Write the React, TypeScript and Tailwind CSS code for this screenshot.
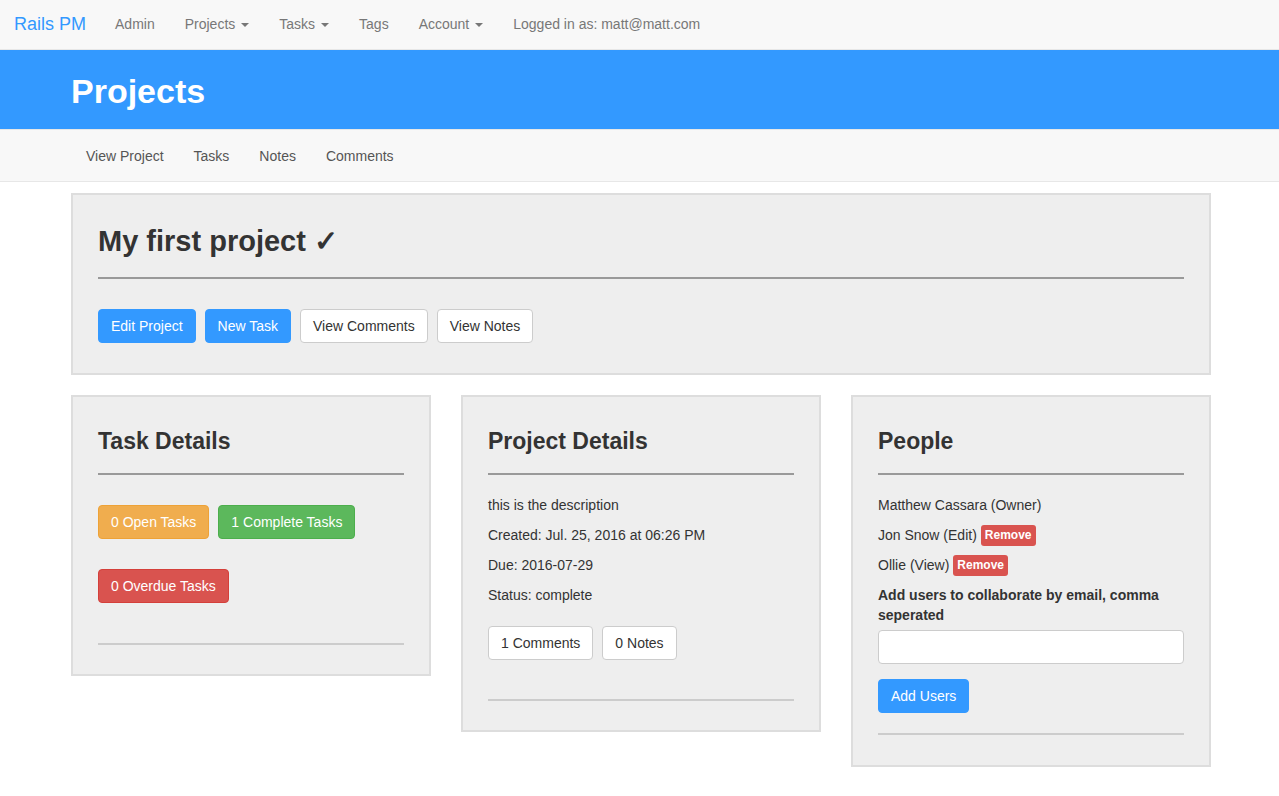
const Caret = () => (
  <span className="ml-[6px] inline-block h-0 w-0 border-x-[4px] border-t-[4px] border-x-transparent border-t-[#777] align-middle" />
);

const Btn = ({ children, kind }: { children: React.ReactNode; kind: 'blue' | 'white' }) => (
  <button
    className={
      kind === 'blue'
        ? 'h-[34px] rounded-[4px] border border-[#3399ff] bg-[#3399ff] px-[12px] text-[14px] text-white'
        : 'h-[34px] rounded-[4px] border border-[#cccccc] bg-white px-[12px] text-[14px] text-[#333]'
    }
  >
    {children}
  </button>
);

const Label = ({ children, color }: { children: React.ReactNode; color: string }) => (
  <span className={`inline-flex h-[34px] items-center rounded-[4px] border px-[12px] text-[14px] text-white ${color}`}>
    {children}
  </span>
);

const Remove = () => (
  <span className="ml-[4px] inline-flex h-[21px] shrink-0 items-center rounded-[3px] bg-[#d9534f] px-[4px] text-[12px] font-bold text-white">
    Remove
  </span>
);

export default function App() {
  return (
    <div className="min-h-[796px] bg-white text-[14px] text-[#333]" style={{ fontFamily: '"Liberation Sans", Arial, sans-serif' }}>
      {/* top navbar */}
      <nav className="flex h-[50px] items-center border-b border-[#e7e7e7] bg-[#f8f8f8] text-[#777]">
        <span className="px-[14px] text-[18px] text-[#3399ff]">Rails PM</span>
        <span className="px-[15px]">Admin</span>
        <span className="px-[15px]">Projects<Caret /></span>
        <span className="px-[15px]">Tasks<Caret /></span>
        <span className="px-[15px]">Tags</span>
        <span className="px-[15px]">Account<Caret /></span>
        <span className="px-[15px]">Logged in as: matt@matt.com</span>
      </nav>

      {/* page header */}
      <div className="flex h-[79px] items-center bg-[#3399ff] pt-[3px]">
        <h1 className="ml-[71px] text-[34px] font-bold text-white">Projects</h1>
      </div>

      {/* sub nav */}
      <div className="flex h-[53px] items-center border-y border-[#e7e7e7] bg-[#f8f8f8] pl-[71px] pt-[2px] text-[#555]">
        <span className="px-[15px]">View Project</span>
        <span className="px-[15px]">Tasks</span>
        <span className="px-[15px]">Notes</span>
        <span className="px-[15px]">Comments</span>
      </div>

      <div className="ml-[71px] w-[1140px] pt-[11px]">
        <div className="border-2 border-[#dddddd] bg-[#eeeeee] px-[25px] pb-[30px] pt-[30px]">
          <h2 className="text-[29px] font-bold leading-[33px]">My first project ✓</h2>
          <hr className="mt-[19px] border-t-2 border-[#999]" />
          <div className="mt-[30px] flex gap-[9px]">
            <Btn kind="blue">Edit Project</Btn>
            <Btn kind="blue">New Task</Btn>
            <Btn kind="white">View Comments</Btn>
            <Btn kind="white">View Notes</Btn>
          </div>
        </div>

        <div className="mt-[20px] grid grid-cols-3 items-start gap-[30px]">
          <div className="border-2 border-[#dddddd] bg-[#eeeeee] px-[25px] pb-[29px] pt-[31px]">
            <h3 className="text-[23px] font-bold leading-[26px]">Task Details</h3>
            <hr className="mt-[19px] border-t-2 border-[#999]" />
            <div className="mt-[30px] flex gap-[9px]">
              <Label color="border-[#eea236] bg-[#f0ad4e]">0 Open Tasks</Label>
              <Label color="border-[#4cae4c] bg-[#5cb85c]">1 Complete Tasks</Label>
            </div>
            <div className="mt-[30px] flex">
              <Label color="border-[#d43f3a] bg-[#d9534f]">0 Overdue Tasks</Label>
            </div>
            <hr className="mt-[40px] border-t-2 border-[#cccccc]" />
          </div>

          <div className="border-2 border-[#dddddd] bg-[#eeeeee] px-[25px] pb-[29px] pt-[31px]">
            <h3 className="text-[23px] font-bold leading-[26px]">Project Details</h3>
            <hr className="mt-[19px] border-t-2 border-[#999]" />
            <div className="mt-[20px] flex flex-col gap-[10px] leading-[20px]">
              <p>this is the description</p>
              <p>Created: Jul. 25, 2016 at 06:26 PM</p>
              <p>Due: 2016-07-29</p>
              <p>Status: complete</p>
            </div>
            <div className="mt-[21px] flex gap-[9px]">
              <Btn kind="white">1 Comments</Btn>
              <Btn kind="white">0 Notes</Btn>
            </div>
            <hr className="mt-[39px] border-t-2 border-[#cccccc]" />
          </div>

          <div className="border-2 border-[#dddddd] bg-[#eeeeee] px-[25px] pb-[30px] pt-[31px]">
            <h3 className="text-[23px] font-bold leading-[26px]">People</h3>
            <hr className="mt-[19px] border-t-2 border-[#999]" />
            <div className="mt-[20px] flex flex-col gap-[10px] leading-[20px]">
              <p>Matthew Cassara (Owner)</p>
              <p className="flex h-[20px] items-center">Jon Snow (Edit)<Remove /></p>
              <p className="flex h-[20px] items-center">Ollie (View)<Remove /></p>
            </div>
            <p className="mt-[10px] font-bold leading-[20px]">Add users to collaborate by email, comma seperated</p>
            <input className="mt-[5px] block h-[34px] w-full rounded-[4px] border border-[#cccccc] bg-white px-[12px]" />
            <div className="mt-[15px] flex">
              <Btn kind="blue">Add Users</Btn>
            </div>
            <hr className="mt-[20px] border-t-2 border-[#cccccc]" />
          </div>
        </div>
      </div>
    </div>
  );
}
